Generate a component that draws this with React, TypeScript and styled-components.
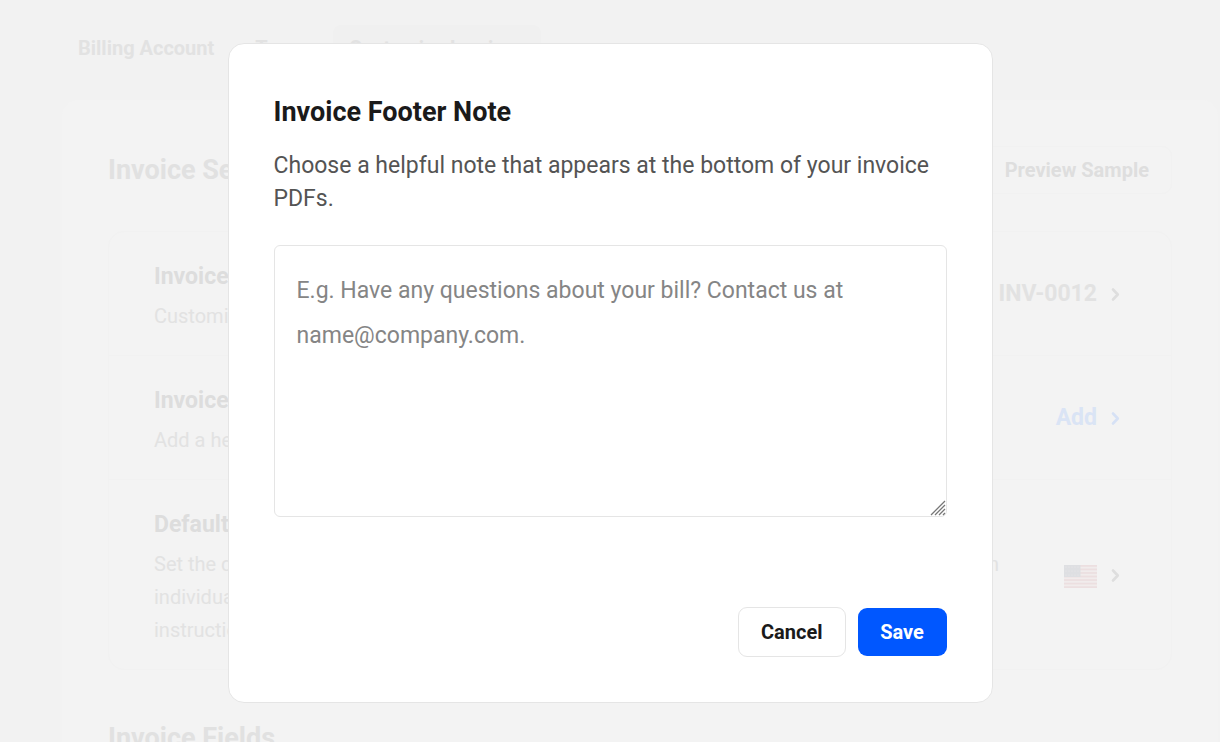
import React from 'react';
import styled, { createGlobalStyle } from 'styled-components';

const GlobalStyle = createGlobalStyle`
  *, *::before, *::after { box-sizing: border-box; }
  body {
    margin: 0;
    background: #f2f2f2;
    font-family: Roboto, "Liberation Sans", sans-serif;
    overflow: hidden;
  }
  h1, h2, h3, p, ul { margin: 0; padding: 0; }
  button, textarea { font-family: inherit; }
`;

const Page = styled.div`
  height: 100vh;
  overflow: hidden;
  padding: 25px 2px 0 62px;
`;

const Tabs = styled.nav`
  display: flex;
  gap: 9px;
  margin-bottom: 29px;
`;

const Tab = styled.a<{ $active?: boolean }>`
  padding: 0 16px;
  border-radius: 8px;
  font-size: 20px;
  line-height: 46px;
  font-weight: 700;
  color: #e2e2e2;
  text-decoration: none;
  background: ${(p) => (p.$active ? '#f0f0f0' : 'transparent')};
`;

const Panel = styled.main`
  padding: 46px;
  border-radius: 16px;
  background: #f3f3f3;
`;

const PanelHeader = styled.header`
  display: flex;
  align-items: center;
  justify-content: space-between;
  margin-bottom: 37px;
`;

const SectionTitle = styled.h2`
  font-size: 27px;
  line-height: 36px;
  font-weight: 700;
  color: #e1e1e1;
`;

const PreviewButton = styled.button`
  height: 48px;
  padding: 0 22px;
  border: 1px solid #f1f1f1;
  border-radius: 10px;
  background: transparent;
  font-size: 20px;
  font-weight: 700;
  color: #dedede;
`;

const SettingList = styled.ul`
  margin-bottom: 50px;
  border: 1px solid #f1f1f1;
  border-radius: 16px;
  list-style: none;
`;

const SettingRow = styled.li`
  display: flex;
  align-items: center;
  justify-content: space-between;
  padding: 28px 43px 22px 45px;

  & + & { border-top: 1px solid #f1f1f1; }
`;

const SettingTitle = styled.h3`
  margin-bottom: 7px;
  font-size: 23px;
  line-height: 33px;
  font-weight: 700;
  color: #dddddd;
`;

const SettingText = styled.p`
  font-size: 20px;
  line-height: 33px;
  color: #e2e2e2;
  white-space: pre-line;
`;

const SettingAction = styled.button<{ $accent?: boolean }>`
  display: flex;
  align-items: center;
  gap: 7px;
  padding: 0 0 7px;
  border: 0;
  background: transparent;
  font-size: 23px;
  line-height: 33px;
  font-weight: 700;
  color: ${(p) => (p.$accent ? '#dae4f5' : '#e2e2e2')};
`;

const Overlay = styled.div`
  position: fixed;
  inset: 0;
  display: flex;
  align-items: flex-start;
  justify-content: center;
  padding: 43px 24px;
`;

const Dialog = styled.section`
  width: 100%;
  max-width: 765px;
  padding: 50px 45px 45px;
  border: 1px solid #e5e5e5;
  border-radius: 16px;
  background: #fff;
`;

const DialogTitle = styled.h1`
  margin-bottom: 19px;
  font-size: 27px;
  line-height: 36px;
  font-weight: 700;
  color: #1a1a1a;
`;

const DialogText = styled.p`
  margin-bottom: 30px;
  font-size: 23px;
  line-height: 33px;
  color: #545454;
`;

const NoteField = styled.div`
  position: relative;
  margin-bottom: 90px;
`;

const NoteInput = styled.textarea`
  display: block;
  width: 100%;
  height: 272px;
  padding: 22px;
  border: 1px solid #e5e5e5;
  border-radius: 6px;
  outline: none;
  resize: none;
  background: #fff;
  font-size: 23px;
  line-height: 45px;
  color: #1a1a1a;

  &::placeholder { color: #858585; opacity: 1; }
`;

const Grip = styled.svg`
  position: absolute;
  right: 1px;
  bottom: 1px;
`;

const Actions = styled.footer`
  display: flex;
  align-items: center;
  justify-content: flex-end;
  gap: 12px;
`;

const Button = styled.button<{ $primary?: boolean }>`
  min-width: 89px;
  height: ${(p) => (p.$primary ? '48px' : '50px')};
  padding: 0 22px;
  border: ${(p) => (p.$primary ? '0' : '1px solid #e5e5e5')};
  border-radius: 9px;
  background: ${(p) => (p.$primary ? '#0057ff' : '#fff')};
  color: ${(p) => (p.$primary ? '#fff' : '#1a1a1a')};
  font-size: 20px;
  font-weight: 700;
`;

const Chevron = ({ color }: { color: string }) => (
  <svg width="24" height="24" viewBox="0 0 24 24" fill="none" aria-hidden="true">
    <path d="M9 8.500l4.800 5-4.800 5" stroke={color} strokeWidth="2.600" strokeLinecap="round" strokeLinejoin="round" />
  </svg>
);

const Flag = () => (
  <svg width="33" height="28" viewBox="0 -5 33 28" role="img" aria-label="United States">
    <rect width="33" height="23" fill="#f1ecec" />
    {[0, 1, 2, 3, 4, 5, 6].map((i) => (
      <rect key={i} y={i * 3.54} width="33" height="1.770" fill="#ecdfe0" />
    ))}
    <rect width="16.500" height="12" fill="#dedfe2" />
    {[2, 6, 10].map((y) =>
      [2, 5, 8, 11, 14].map((x) => <circle key={`${x}-${y}`} cx={x} cy={y} r="0.600" fill="#e8e9eb" />),
    )}
  </svg>
);

export default function App() {
  return (
    <>
      <GlobalStyle />
      <Page>
        <Tabs>
          <Tab href="#account">Billing Account</Tab>
          <Tab href="#taxes">Taxes</Tab>
          <Tab href="#invoices" $active>Customize Invoices</Tab>
        </Tabs>
        <Panel>
          <PanelHeader>
            <SectionTitle>Invoice Settings</SectionTitle>
            <PreviewButton type="button">Preview Sample</PreviewButton>
          </PanelHeader>
          <SettingList>
            <SettingRow>
              <div>
                <SettingTitle>Invoice Number</SettingTitle>
                <SettingText>Customize the invoice number format.</SettingText>
              </div>
              <SettingAction type="button">
                INV-0012 <Chevron color="#dedede" />
              </SettingAction>
            </SettingRow>
            <SettingRow>
              <div>
                <SettingTitle>Invoice Footer Note</SettingTitle>
                <SettingText>Add a helpful note to the bottom of your invoices.</SettingText>
              </div>
              <SettingAction type="button" $accent>
                Add <Chevron color="#d6e1f5" />
              </SettingAction>
            </SettingRow>
            <SettingRow>
              <div>
                <SettingTitle>Default Language</SettingTitle>
                <SettingText>
                  {'Set the default language of your invoices. You can always choose another language again when\nindividual invoices need it.\ninstructions are translated too.'}
                </SettingText>
              </div>
              <SettingAction type="button" aria-label="Change language">
                <Flag /> <Chevron color="#dedede" />
              </SettingAction>
            </SettingRow>
          </SettingList>
          <SectionTitle>Invoice Fields</SectionTitle>
        </Panel>
      </Page>
      <Overlay>
        <Dialog role="dialog" aria-modal="true" aria-labelledby="note-title">
          <DialogTitle id="note-title">Invoice Footer Note</DialogTitle>
          <DialogText id="note-text">
            Choose a helpful note that appears at the bottom of your invoice PDFs.
          </DialogText>
          <NoteField>
            <NoteInput
              aria-labelledby="note-title"
              aria-describedby="note-text"
              placeholder="E.g. Have any questions about your bill? Contact us at name@company.com."
            />
            <Grip width="16" height="16" viewBox="0 0 16 16" aria-hidden="true">
              <path d="M1 15L15 1M5 15L15 5M9 15L15 9M13 15L15 13" stroke="#777" strokeWidth="1.300" />
            </Grip>
          </NoteField>
          <Actions>
            <Button type="button">Cancel</Button>
            <Button type="button" $primary>Save</Button>
          </Actions>
        </Dialog>
      </Overlay>
    </>
  );
}
